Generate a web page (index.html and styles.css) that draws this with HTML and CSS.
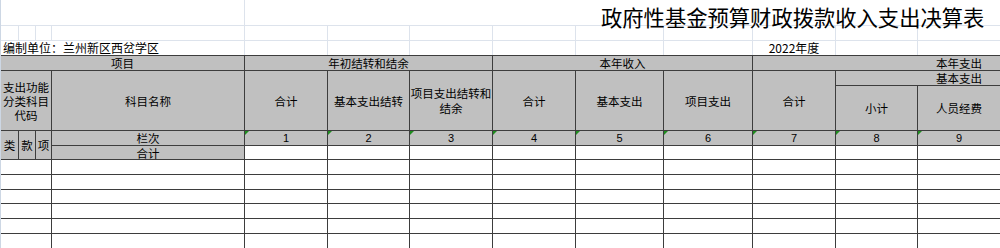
FILE: index.html
```html
<!DOCTYPE html>
<html lang="zh-CN">
<head>
<meta charset="utf-8">
<title>政府性基金预算财政拨款收入支出决算表</title>
<link rel="stylesheet" href="styles.css">
</head>
<body>
<div class="sheet">
  <div class="top cols">
    <div class="tc span4"></div>
    <div class="tc title span9"><span class="title-text">政府性基金预算财政拨款收入支出决算表</span></div>
    <div class="tc"></div><div class="tc"></div><div class="tc"></div><div class="tc"></div><div class="tc"></div><div class="tc"></div><div class="tc"></div><div class="tc"></div><div class="tc"></div><div class="tc"></div><div class="tc"></div><div class="tc"></div><div class="tc"></div>
    <div class="tc unit span4">编制单位：兰州新区西岔学区</div>
    <div class="tc"></div><div class="tc"></div><div class="tc"></div><div class="tc"></div><div class="tc"></div><div class="tc"></div>
    <div class="tc year">2022年度</div>
    <div class="tc"></div><div class="tc"></div>
  </div>
  <div class="grid cols">
    <div class="c g span4">项目</div>
    <div class="c g span3">年初结转和结余</div>
    <div class="c g span3">本年收入</div>
    <div class="c g span3 right">本年支出</div>

    <div class="c g span3 rows2">支出功能<br>分类科目<br>代码</div>
    <div class="c g rows2">科目名称</div>
    <div class="c g rows2">合计</div>
    <div class="c g rows2">基本支出结转</div>
    <div class="c g rows2 lh15">项目支出结转和<br>结余</div>
    <div class="c g rows2">合计</div>
    <div class="c g rows2">基本支出</div>
    <div class="c g rows2">项目支出</div>
    <div class="c g rows2">合计</div>
    <div class="c g span2 right">基本支出</div>
    <div class="c g">小计</div>
    <div class="c g">人员经费</div>

    <div class="c g rows2">类</div>
    <div class="c g rows2">款</div>
    <div class="c g rows2">项</div>
    <div class="c g">栏次</div>
    <div class="c g mark num">1</div>
    <div class="c g mark num">2</div>
    <div class="c g mark num">3</div>
    <div class="c g mark num">4</div>
    <div class="c g mark num">5</div>
    <div class="c g mark num">6</div>
    <div class="c g mark num">7</div>
    <div class="c g mark num">8</div>
    <div class="c g mark num">9</div>

    <div class="c g">合计</div>
    <div class="c w"></div><div class="c w"></div><div class="c w"></div><div class="c w"></div><div class="c w"></div><div class="c w"></div><div class="c w"></div><div class="c w"></div><div class="c w"></div>

    <div class="c w span3"></div><div class="c w"></div><div class="c w"></div><div class="c w"></div><div class="c w"></div><div class="c w"></div><div class="c w"></div><div class="c w"></div><div class="c w"></div><div class="c w"></div><div class="c w"></div>
    <div class="c w span3"></div><div class="c w"></div><div class="c w"></div><div class="c w"></div><div class="c w"></div><div class="c w"></div><div class="c w"></div><div class="c w"></div><div class="c w"></div><div class="c w"></div><div class="c w"></div>
    <div class="c w span3"></div><div class="c w"></div><div class="c w"></div><div class="c w"></div><div class="c w"></div><div class="c w"></div><div class="c w"></div><div class="c w"></div><div class="c w"></div><div class="c w"></div><div class="c w"></div>
    <div class="c w span3"></div><div class="c w"></div><div class="c w"></div><div class="c w"></div><div class="c w"></div><div class="c w"></div><div class="c w"></div><div class="c w"></div><div class="c w"></div><div class="c w"></div><div class="c w"></div>
    <div class="c w span3"></div><div class="c w"></div><div class="c w"></div><div class="c w"></div><div class="c w"></div><div class="c w"></div><div class="c w"></div><div class="c w"></div><div class="c w"></div><div class="c w"></div><div class="c w"></div>
    <div class="c w span3"></div><div class="c w"></div><div class="c w"></div><div class="c w"></div><div class="c w"></div><div class="c w"></div><div class="c w"></div><div class="c w"></div><div class="c w"></div><div class="c w"></div><div class="c w"></div>
  </div>
</div>
</body>
</html>
```

FILE: styles.css
```css
html, body {
  margin: 0;
  padding: 0;
  overflow: hidden;
  background: #ffffff;
}

body {
  font-family: "Noto Sans CJK SC", "Noto Sans", sans-serif;
  font-size: 11.5px;
  color: #000000;
}

.sheet {
  width: 999px;
  height: 248px;
  border-left: 1px solid #cdd7e4;
}

.cols {
  display: grid;
  grid-template-columns: 17px 16px 15px 192px 82px 81px 82px 82px 87px 88px 82px 81px 82px;
  column-gap: 1px;
  row-gap: 1px;
}

.top {
  background: #dde3ec;
  grid-template-rows: 25px 14px 14px;
}

.tc {
  background: #ffffff;
  white-space: nowrap;
  line-height: 14px;
}

.title {
  position: relative;
  z-index: 1;
  padding-left: 356px;
  padding-top: 1px;
  display: flex;
  align-items: flex-start;
}

.title-text {
  font-size: 21.3px;
  line-height: normal;
}

.unit {
  font-size: 12px;
  padding-left: 2px;
  display: flex;
  align-items: center;
}

.year {
  font-size: 12px;
  display: flex;
  align-items: center;
  justify-content: center;
}

.grid {
  background: #3d3d3d;
  border-top: 1px solid #3d3d3d;
  grid-template-rows: 14px 14px 44px 14px 13px;
  grid-auto-rows: 13.83px;
}

.c {
  display: flex;
  align-items: center;
  justify-content: center;
  text-align: center;
  white-space: nowrap;
  line-height: 14px;
}

.lh15 {
  line-height: 15px;
}

.g {
  background: #c0c0c0;
}

.w {
  background: #ffffff;
}

.span2 { grid-column: span 2; }
.span3 { grid-column: span 3; }
.span4 { grid-column: span 4; }
.span9 { grid-column: span 9; }
.rows2 { grid-row: span 2; }

.right {
  justify-content: flex-end;
  padding-right: 18px;
}

.num {
  font-family: "Liberation Sans", "Noto Sans", sans-serif;
  font-size: 11px;
}

.mark {
  position: relative;
}

.mark::before {
  content: "";
  position: absolute;
  left: 0;
  top: 0;
  border-top: 4px solid #1e8c1e;
  border-right: 4px solid transparent;
}
```
